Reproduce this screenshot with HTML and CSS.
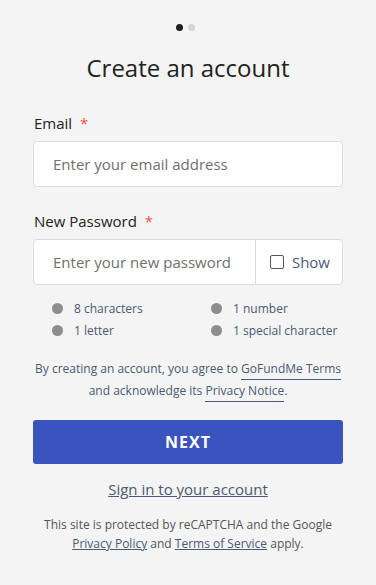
FILE: index.html
```html
<!DOCTYPE html>
<html lang="en">
<head>
    <meta charset="UTF-8">
    <meta name="viewport" content="width=device-width, initial-scale=1.0">
    <title>Create an account</title>
    <link rel="stylesheet" href="styles.css">
</head>
<body>

    <div class="page">
        <div class="steps">
            <span class="step active"></span>
            <span class="step"></span>
        </div>

        <h1>Create an account</h1>

        <label class="label" for="email">Email <span class="req">*</span></label>
        <div class="field">
            <input id="email" type="email" placeholder="Enter your email address">
        </div>

        <label class="label" for="password">New Password <span class="req">*</span></label>
        <div class="field">
            <input id="password" type="password" placeholder="Enter your new password">
            <label class="show"><span class="box"></span>Show</label>
        </div>

        <ul class="rules">
            <li>8 characters</li>
            <li>1 number</li>
            <li>1 letter</li>
            <li>1 special character</li>
        </ul>

        <p class="terms">
            By creating an account, you agree to <a href="#">GoFundMe Terms</a><br>
            and acknowledge its <a href="#">Privacy Notice</a>.
        </p>

        <button class="next">NEXT</button>

        <a class="signin" href="#">Sign in to your account</a>

        <p class="captcha">
            This site is protected by reCAPTCHA and the Google<br>
            <a href="#">Privacy Policy</a> and <a href="#">Terms of Service</a> apply.
        </p>
    </div>

</body>
</html>
```

FILE: styles.css
```css
body {
    margin: 0;
    background: #f4f4f4;
    font-family: 'Open Sans', sans-serif;
    color: #222;
}

.page {
    padding: 24px 33px 0;
    display: flex;
    flex-direction: column;
}

.steps {
    display: flex;
    justify-content: center;
    gap: 5px;
    margin-left: -6px;
}

.step {
    width: 7px;
    height: 7px;
    border-radius: 50%;
    background: #d4d4d4;
}

.step.active {
    background: #1d1d1d;
}

h1 {
    margin: 21px 0 29px;
    font-size: 24px;
    font-weight: 400;
    line-height: 32px;
    text-align: center;
    color: #222;
}

.label {
    font-size: 15px;
    line-height: 20px;
    margin: 0 0 8px 1px;
}

.req {
    color: #f2563f;
    margin-left: 4px;
}

.field {
    display: flex;
    height: 44px;
    background: white;
    border: 1px solid #dcdcdc;
    border-radius: 4px;
    margin-bottom: 24px;
}

.field input {
    flex: 1;
    min-width: 0;
    border: none;
    outline: none;
    background: transparent;
    padding: 0 0 0 19px;
    font-family: inherit;
    font-size: 15px;
    color: #333;
}

.field input::placeholder {
    color: #6f6f6f;
}

.show {
    display: flex;
    align-items: center;
    gap: 8px;
    padding: 0 12px 0 14px;
    border-left: 1px solid #dcdcdc;
    font-size: 15px;
    color: #4a5a72;
}

.box {
    width: 12px;
    height: 12px;
    border: 1px solid #555;
    border-radius: 2px;
}

.rules {
    list-style: none;
    margin: -10px 0 0;
    padding: 0 0 0 19px;
    display: grid;
    grid-template-columns: 159px 1fr;
    row-gap: 3px;
}

.rules li {
    display: flex;
    align-items: center;
    gap: 11px;
    font-size: 12px;
    line-height: 19px;
    color: #4a5a72;
}

.rules li::before {
    content: "";
    width: 11px;
    height: 11px;
    border-radius: 50%;
    background: #8d8d8d;
}

.terms {
    margin: 18px 0 0;
    text-align: center;
    font-size: 12px;
    line-height: 22px;
    color: #4a5a72;
}

.terms a {
    color: #4a5a72;
    text-decoration: none;
    border-bottom: 1px solid #4a5a72;
    padding-bottom: 2px;
}

.next {
    margin-top: 18px;
    height: 44px;
    border: none;
    border-radius: 3px;
    background: #3b53bc;
    color: white;
    font-family: inherit;
    font-size: 16px;
    font-weight: 700;
    letter-spacing: 1px;
    cursor: pointer;
}

.signin {
    align-self: center;
    margin-top: 15px;
    font-size: 15px;
    line-height: 20px;
    color: #4a5a72;
}

.captcha {
    margin: 16px 0 0;
    text-align: center;
    font-size: 12px;
    line-height: 19px;
    color: #555;
}

.captcha a {
    color: #4a5a72;
}
```
